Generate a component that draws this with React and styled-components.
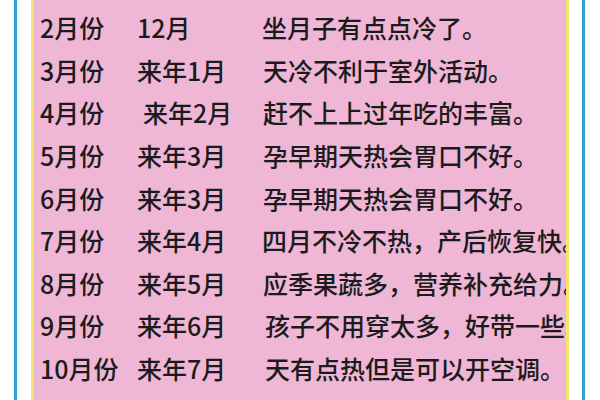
import React from "react";
import styled, { createGlobalStyle } from "styled-components";

const Global = createGlobalStyle`
  html, body { margin: 0; padding: 0; background: #ffffff; }
  #root { width: 600px; height: 400px; overflow: hidden; }
`;

const Page = styled.div`
  display: flex;
  height: 400px;
  padding-left: 14px;
  gap: 14px;
  box-sizing: border-box;
`;

const BlueRule = styled.div`
  width: 3px;
  flex: none;
  background: #2f9fd6;
`;

const Panel = styled.div`
  width: 526px;
  flex: none;
  background: #efb6d6;
  border-left: 3px solid #f4e56c;
  border-right: 3px solid #f4e56c;
  overflow: hidden;
  padding: 6px 0 0 6px;
  box-sizing: content-box;
  margin-right: -1px;
`;

const Row = styled.div`
  display: grid;
  grid-template-columns: 97px 125px 1fr;
  height: 42.6px;
  align-items: center;
  font-family: "Noto Sans CJK SC", "Noto Sans", sans-serif;
  font-size: 25px;
  font-weight: 500;
  color: #1b1b1b;
  white-space: nowrap;
`;

const Cell = styled.span`
  padding-left: ${(p) => p.$shift || 0}px;
`;

const rows = [
  ["2月份", "12月", "坐月子有点点冷了。", 0, 0],
  ["3月份", "来年1月", "天冷不利于室外活动。", 0, 1],
  ["4月份", "来年2月", "赶不上上过年吃的丰富。", 6, 1],
  ["5月份", "来年3月", "孕早期天热会胃口不好。", 0, 1],
  ["6月份", "来年3月", "孕早期天热会胃口不好。", 0, 1],
  ["7月份", "来年4月", "四月不冷不热，产后恢复快。", 0, 0],
  ["8月份", "来年5月", "应季果蔬多，营养补充给力。", 0, 1],
  ["9月份", "来年6月", "孩子不用穿太多，好带一些。", 0, 3],
  ["10月份", "来年7月", "天有点热但是可以开空调。", 0, 3],
];

export default function App() {
  return (
    <>
      <Global />
      <Page>
        <BlueRule />
        <Panel>
          {rows.map(([a, b, c, s2, s3]) => (
            <Row key={a}>
              <Cell>{a}</Cell>
              <Cell $shift={s2}>{b}</Cell>
              <Cell $shift={s3}>{c}</Cell>
            </Row>
          ))}
        </Panel>
        <BlueRule />
      </Page>
    </>
  );
}
